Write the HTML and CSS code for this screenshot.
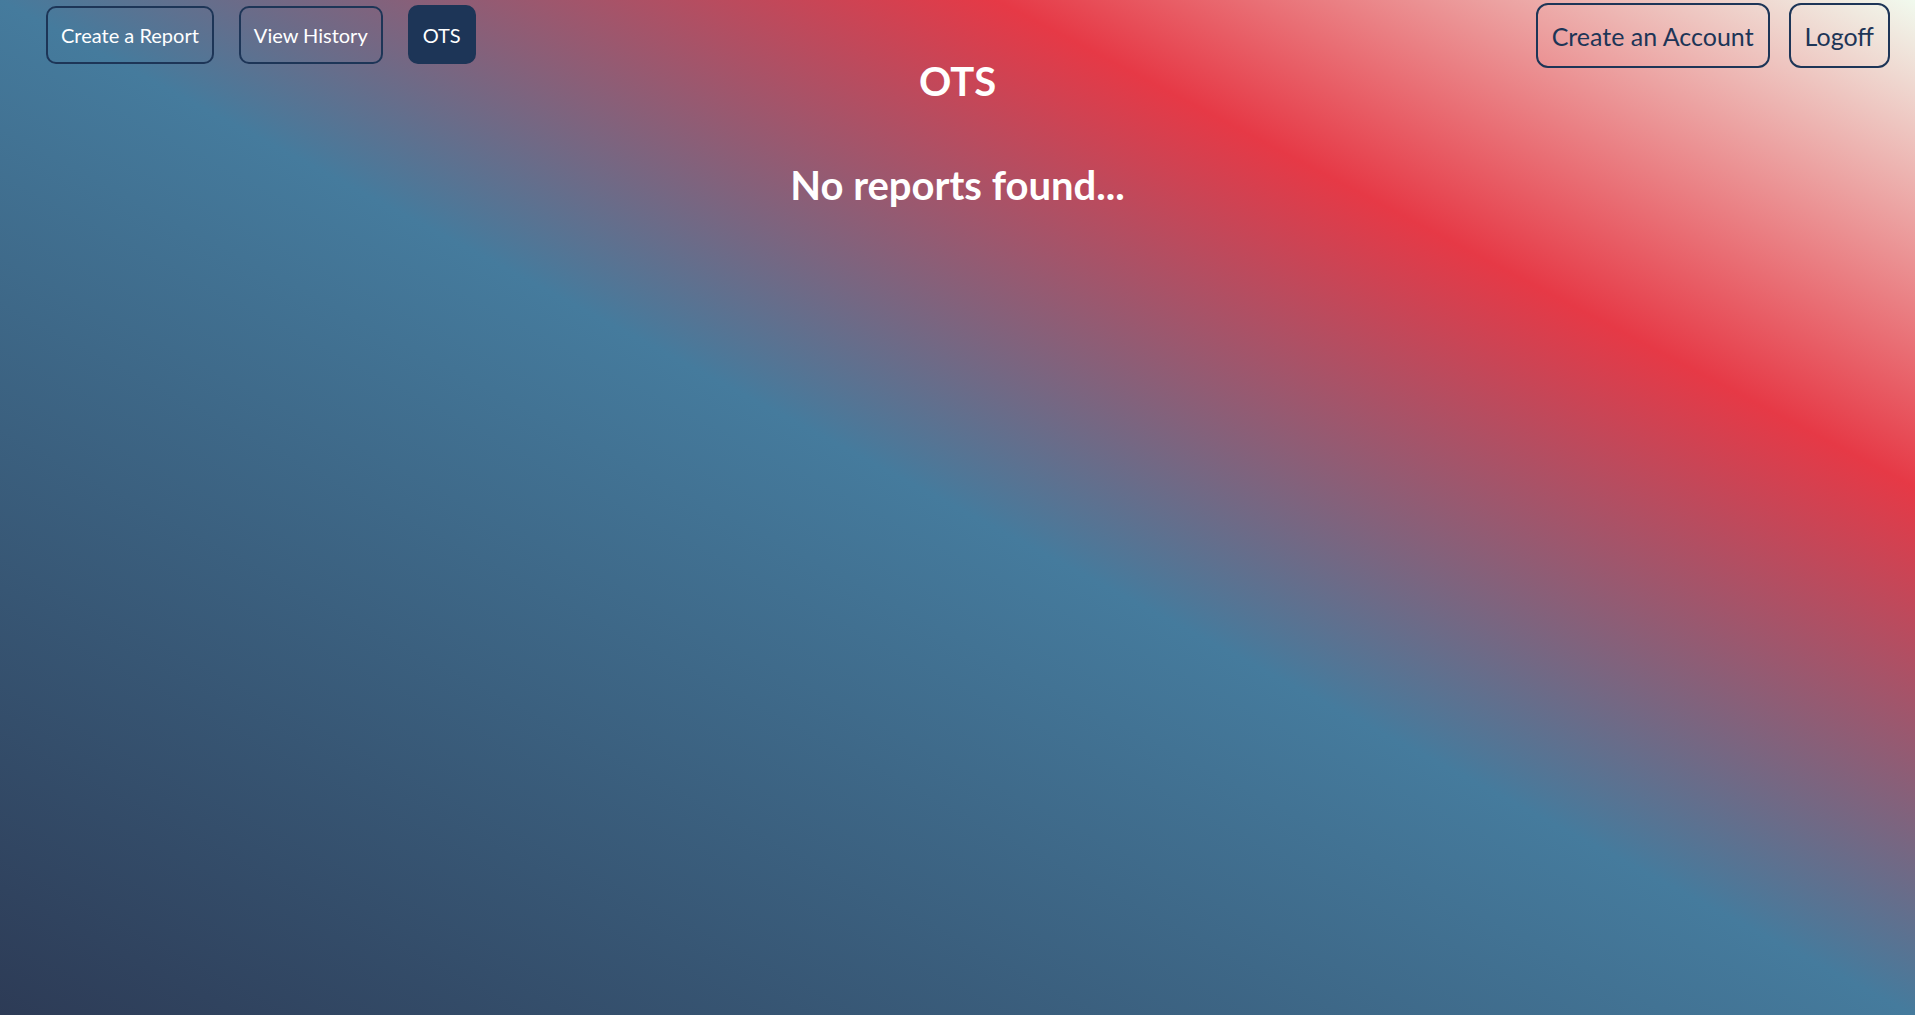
FILE: index.html
```html
<!DOCTYPE html>
<html lang="en">
<head>
<meta charset="utf-8">
<title>OTS</title>
<link rel="stylesheet" href="styles.css">
</head>
<body>
<div class="page">
  <header class="topbar">
    <nav class="nav nav-left">
      <button class="btn btn-sm">Create a Report</button>
      <button class="btn btn-sm">View History</button>
      <button class="btn btn-sm btn-active">OTS</button>
    </nav>
    <h1 class="title">OTS</h1>
    <nav class="nav nav-right">
      <button class="btn btn-lg">Create an Account</button>
      <button class="btn btn-lg">Logoff</button>
    </nav>
  </header>
  <main class="content">
    <h2 class="empty">No reports found...</h2>
  </main>
</div>
</body>
</html>
```

FILE: styles.css
```css
html, body {
  margin: 0;
  padding: 0;
  height: 100%;
}
body {
  font-family: "Lato", "Noto Sans", sans-serif;
  background: linear-gradient(to top right, #2d3b56 0%, #457b9d 50%, #e63946 76%, #f1faee 100%);
  color: #ffffff;
  overflow: hidden;
}
.page {
  min-height: 100vh;
}
.topbar {
  display: grid;
  grid-template-columns: 1fr auto 1fr;
  align-items: start;
}
.nav {
  display: flex;
  gap: 25px;
}
.nav-left {
  justify-self: start;
  padding-left: 46px;
  padding-top: 6px;
}
.nav-right {
  justify-self: end;
  padding-right: 25px;
  padding-top: 3px;
  gap: 19px;
}
.btn {
  font-family: inherit;
  background: transparent;
  border: 2px solid #1d3557;
  cursor: pointer;
}
.btn-sm {
  color: #ffffff;
  font-size: 20px;
  height: 58px;
  padding: 0 13px;
  border-radius: 10px;
}
.btn-active {
  background: #1d3557;
  height: 59px;
  margin-top: -1px;
}
.btn-lg {
  color: #1d3557;
  font-size: 25px;
  height: 65px;
  padding: 0 14px;
  border-radius: 12px;
}
.title {
  margin: 0;
  padding-top: 57px;
  font-size: 40px;
  font-weight: 700;
  line-height: 48px;
  text-align: center;
}
.content {
  display: flex;
  justify-content: center;
}
.empty {
  margin: 0;
  padding-top: 57px;
  font-size: 40px;
  font-weight: 700;
  line-height: 46px;
}
```
